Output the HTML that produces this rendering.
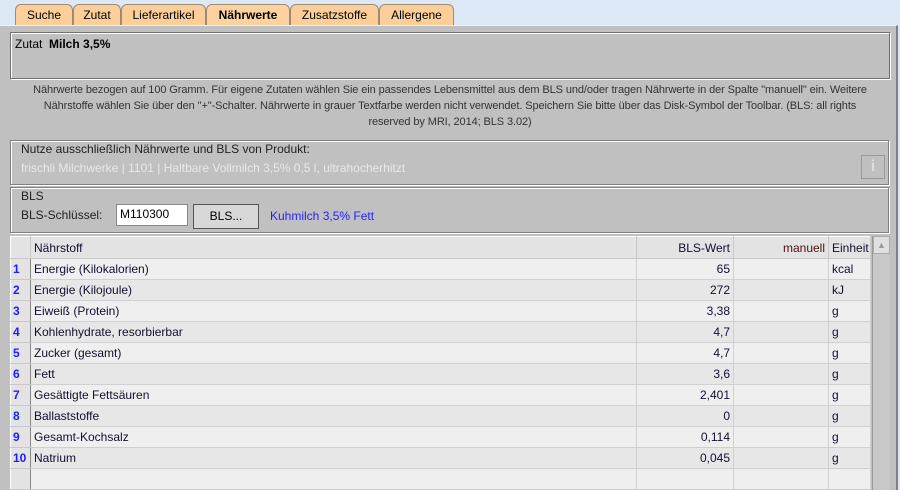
<!DOCTYPE html>
<html><head><meta charset="utf-8"><style>
*{box-sizing:border-box;margin:0;padding:0}
html,body{width:900px;height:490px;overflow:hidden}
body{background:#dde8f6;font-family:"Liberation Sans",sans-serif;font-size:12px;color:#000;position:relative}
.tab{position:absolute;top:4px;height:22px;background:#fccf9a;border:1px solid #a08a70;border-bottom:none;border-radius:6px 6px 0 0;text-align:center;line-height:21px;font-size:12px}
.panel{position:absolute;left:0;top:25px;width:898px;height:465px;background:#c0c0c0;border-top:1px solid #f5f5d0;border-right:2px solid #808080;overflow:hidden}
.box{position:absolute;border:1px solid #808080;box-shadow:1px 1px 0 #fff, inset 1px 1px 0 #fff}
.note{position:absolute;left:25px;width:850px;top:56px;text-align:center;font-size:11px;letter-spacing:-0.1px;color:#333;line-height:16px}
table{position:absolute;left:10px;top:210px;border-collapse:collapse;width:860px;table-layout:fixed}
td{height:21px;border:1px solid #d0d0d0;padding:0 3px;font-size:12px;color:#101030;white-space:nowrap;overflow:hidden}
tr.h td{background:#e3e3e3;height:22px;border-color:#fff #c8c8c8 #c8c8c8 #fff}
td.n{background:#e3e3e3;color:#1c1cff;font-weight:bold;padding:0 2px;border-color:#fff #888 #c8c8c8 #fff}
tr:nth-child(even) td:not(.n){background:#efefef}
tr:nth-child(odd):not(.h) td:not(.n){background:#e7e7e7}
.r{text-align:right}
</style></head><body>
<div class="tab" style="left:15px;width:58px">Suche</div>
<div class="tab" style="left:73px;width:48px">Zutat</div>
<div class="tab" style="left:121px;width:85px">Lieferartikel</div>
<div class="tab" style="left:206px;width:84px;font-weight:bold;background:#fcd3a0">Nährwerte</div>
<div class="tab" style="left:290px;width:89px">Zusatzstoffe</div>
<div class="tab" style="left:379px;width:75px">Allergene</div>
<div class="panel">
<div class="box" style="left:10px;top:6px;width:880px;height:47px;border-color:#707070">
<div style="position:absolute;left:4px;top:4px">Zutat&nbsp; <b>Milch 3,5%</b></div></div>
<div class="note">Nährwerte bezogen auf 100 Gramm. Für eigene Zutaten wählen Sie ein passendes Lebensmittel aus dem BLS und/oder tragen Nährwerte in der Spalte "manuell" ein. Weitere Nährstoffe wählen Sie über den "+"-Schalter. Nährwerte in grauer Textfarbe werden nicht verwendet. Speichern Sie bitte über das Disk-Symbol der Toolbar. (BLS: all rights reserved by MRI, 2014; BLS 3.02)</div>
<div class="box" style="left:10px;top:114px;width:879px;height:45px">
<div style="position:absolute;left:10px;top:1px;color:#222">Nutze ausschließlich Nährwerte und BLS von Produkt:</div>
<div style="position:absolute;left:10px;top:20px;color:#e8e8e8">frischli Milchwerke | 1101 | Haltbare Vollmilch 3,5% 0,5 l, ultrahocherhitzt</div>
<div style="position:absolute;left:850px;top:14px;width:24px;height:24px;border:1px solid #999;color:#ddd;font-weight:bold;font-size:16px;text-align:center;line-height:22px">i</div>
</div>
<div class="box" style="left:10px;top:161px;width:879px;height:46px">
<div style="position:absolute;left:10px;top:1px;color:#222">BLS</div>
<div style="position:absolute;left:10px;top:20px;color:#222">BLS-Schlüssel:</div>
<div style="position:absolute;left:105px;top:16px;width:72px;height:22px;background:#fff;border:1px solid #888;padding:2px 3px">M110300</div>
<div style="position:absolute;left:182px;top:16px;width:66px;height:25px;background:#d8d8d8;border:1px solid #555;text-align:center;line-height:23px">BLS...</div>
<div style="position:absolute;left:259px;top:21px;color:#2222ff">Kuhmilch 3,5% Fett</div>
</div>
<table>
<colgroup><col style="width:20px"><col style="width:606px"><col style="width:97px"><col style="width:95px"><col style="width:42px"></colgroup>
<tr class="h"><td></td><td>Nährstoff</td><td class="r">BLS-Wert</td><td class="r" style="color:#501010">manuell</td><td>Einheit</td></tr>
<tr><td class="n">1</td><td>Energie (Kilokalorien)</td><td class="r">65</td><td></td><td>kcal</td></tr>
<tr><td class="n">2</td><td>Energie (Kilojoule)</td><td class="r">272</td><td></td><td>kJ</td></tr>
<tr><td class="n">3</td><td>Eiweiß (Protein)</td><td class="r">3,38</td><td></td><td>g</td></tr>
<tr><td class="n">4</td><td>Kohlenhydrate, resorbierbar</td><td class="r">4,7</td><td></td><td>g</td></tr>
<tr><td class="n">5</td><td>Zucker (gesamt)</td><td class="r">4,7</td><td></td><td>g</td></tr>
<tr><td class="n">6</td><td>Fett</td><td class="r">3,6</td><td></td><td>g</td></tr>
<tr><td class="n">7</td><td>Gesättigte Fettsäuren</td><td class="r">2,401</td><td></td><td>g</td></tr>
<tr><td class="n">8</td><td>Ballaststoffe</td><td class="r">0</td><td></td><td>g</td></tr>
<tr><td class="n">9</td><td>Gesamt-Kochsalz</td><td class="r">0,114</td><td></td><td>g</td></tr>
<tr><td class="n">10</td><td>Natrium</td><td class="r">0,045</td><td></td><td>g</td></tr>
<tr><td class="n"></td><td></td><td></td><td></td><td></td></tr>
</table>
<div style="position:absolute;left:872px;top:210px;width:18px;height:260px;background:#c8c8c8;border-left:1px solid #999">
<div style="height:18px;background:#e0e0e0;border:1px solid #aaa;color:#999;font-size:9px;text-align:center;line-height:16px">▲</div></div>
</div>
</body></html>
